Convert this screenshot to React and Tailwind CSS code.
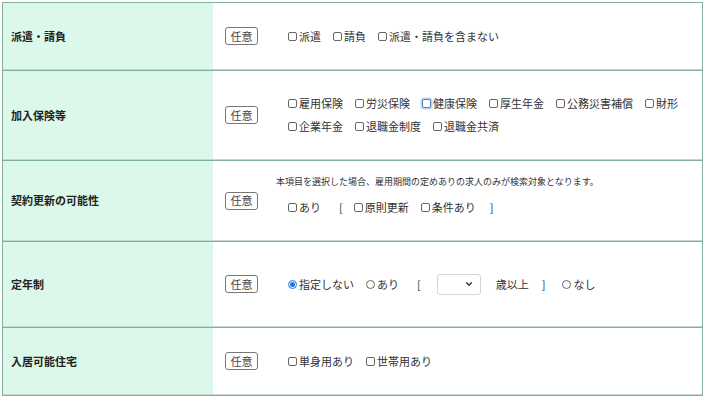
import { ChevronDown } from 'lucide-react';

const font = { fontFamily: '"Noto Sans CJK JP", "Noto Sans", sans-serif' };

function Check({ label, focused }) {
  return (
    <span className="inline-flex items-center mr-3 whitespace-nowrap">
      <span
        className={`w-[9px] h-[9px] mr-[2px] border rounded-[2px] bg-white ${
          focused ? 'border-[#5b7fb0] shadow-[0_0_0_1.5px_#bcd6f8]' : 'border-[#666]'
        }`}
      />
      <span>{label}</span>
    </span>
  );
}

function Radio({ label, checked }) {
  return (
    <span className="inline-flex items-center mr-3 whitespace-nowrap">
      {checked ? (
        <span className="w-[9px] h-[9px] mr-[2px] rounded-full border border-[#1a73e8] bg-white flex items-center justify-center">
          <span className="w-[5px] h-[5px] rounded-full bg-[#1a73e8]" />
        </span>
      ) : (
        <span className="w-[9px] h-[9px] mr-[2px] rounded-full border border-[#666] bg-white" />
      )}
      <span>{label}</span>
    </span>
  );
}

function Badge() {
  return (
    <span className="w-[33px] h-[18px] shrink-0 flex items-center justify-center border border-[#777] rounded-[3px] bg-white text-[11px] text-[#444]">
      任意
    </span>
  );
}

function Row({ label, height, children }) {
  return (
    <div
      className={`grid grid-cols-[210px_1fr] border-t border-t-[#83b09c] border-b border-b-[#c4d8ce] ${height}`}
    >
      <div className="bg-[#dcf8ea] flex items-center pl-2 text-[11px] font-bold text-[#222]">{label}</div>
      <div className="flex items-center pl-3 text-[11px] text-[#333]">
        <Badge />
        <div className="ml-[18px]">{children}</div>
      </div>
    </div>
  );
}

export default function App() {
  return (
    <div className="bg-white min-h-screen pt-[2px] pl-[2px]" style={font}>
      <div className="w-[701px] border-l border-r border-b border-[#83b09c]">
        <Row label="派遣・請負" height="h-[68px]">
          <div className="pl-3 flex items-center h-[23px]">
            <Check label="派遣" />
            <Check label="請負" />
            <Check label="派遣・請負を含まない" />
          </div>
        </Row>

        <Row label="加入保険等" height="h-[90px]">
          <div className="pl-3">
            <div className="flex items-center h-[23px]">
              <Check label="雇用保険" />
              <Check label="労災保険" />
              <Check label="健康保険" focused />
              <Check label="厚生年金" />
              <Check label="公務災害補償" />
              <Check label="財形" />
            </div>
            <div className="flex items-center h-[23px]">
              <Check label="企業年金" />
              <Check label="退職金制度" />
              <Check label="退職金共済" />
            </div>
          </div>
        </Row>

        <Row label="契約更新の可能性" height="h-[81px]">
          <div className="pb-[7px]">
            <div className="h-[13px] flex items-center text-[9px] text-[#333]">
              本項目を選択した場合、雇用期間の定めありの求人のみが検索対象となります。
            </div>
            <div className="pl-3 mt-2 flex items-center h-[23px]">
              <Check label="あり" />
              <span className="ml-[6px] mr-[11px]">[</span>
              <Check label="原則更新" />
              <Check label="条件あり" />
              <span className="ml-[2px]">]</span>
            </div>
          </div>
        </Row>

        <Row label="定年制" height="h-[86px]">
          <div className="pl-3 flex items-center h-[23px]">
            <Radio label="指定しない" checked />
            <Radio label="あり" />
            <span className="ml-[6px] mr-[16px]">[</span>
            <span className="w-[44px] h-[21px] border border-[#d4d4d4] rounded-[3px] bg-white flex items-center justify-end pr-[6px]">
              <ChevronDown className="w-[10px] h-[10px] text-[#333]" strokeWidth={3} />
            </span>
            <span className="ml-[15px]">歳以上</span>
            <span className="ml-[13px] mr-[17px]">]</span>
            <Radio label="なし" />
          </div>
        </Row>

        <Row label="入居可能住宅" height="h-[68px]">
          <div className="pl-3 flex items-center h-[23px]">
            <Check label="単身用あり" />
            <Check label="世帯用あり" />
          </div>
        </Row>
      </div>
    </div>
  );
}
